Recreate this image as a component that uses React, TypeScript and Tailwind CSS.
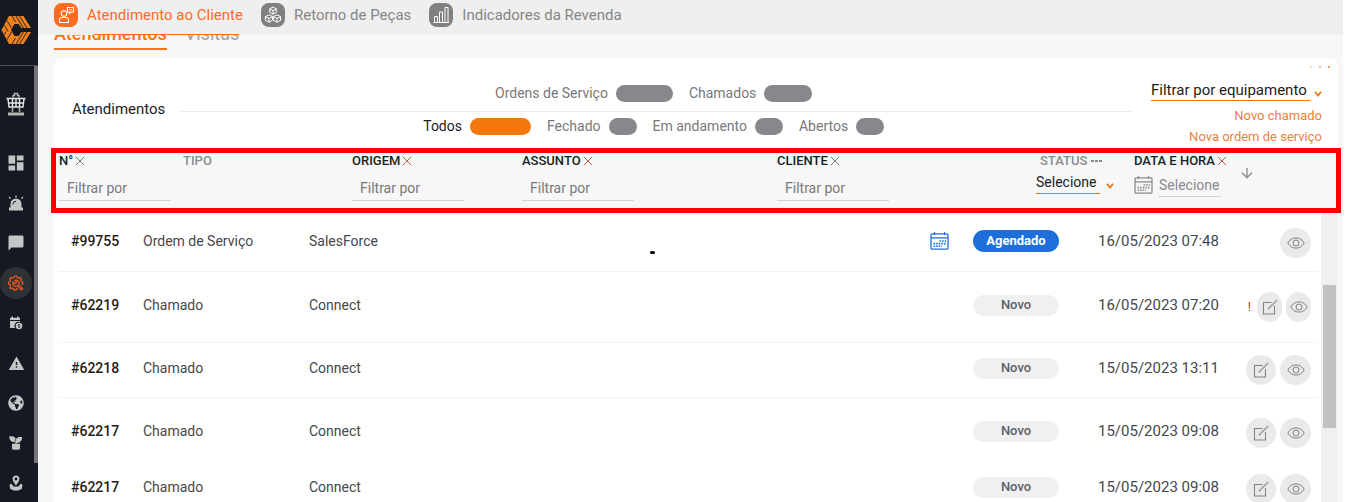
import React, { useState } from 'react';
import { MdDashboard, MdChatBubble, MdWarning } from 'react-icons/md';
import { FaGlobeAmericas } from 'react-icons/fa';
import { RiPlantFill } from 'react-icons/ri';
import { ArrowDown } from 'lucide-react';

type IconProps = { className?: string };

const Logo = () => (
  <svg viewBox="0 0 30 28" className="h-7 w-[30px]">
    <path d="M8 0 H22.5 L30 12 H20.5 L17.5 8 H13.5 L10 14 L13.5 20 H17.5 L20.5 16 H30 L22.5 28 H8 L0.5 14 Z" fill="#f0821e" />
    <path
      d="M11 0 L14.5 6 M15 0 L22.5 12 M18.5 0 L26 12 M6 4.5 L10.5 12 M11 28 L14.5 22 M15 28 L22.5 16 M18.5 28 L26 16 M6 23.5 L10.5 16 M3.5 9.5 L7 15.5 M3.5 18.5 L5 15.5"
      fill="none"
      stroke="#151a22"
      strokeWidth="0.9"
    />
  </svg>
);

const TowerIcon = () => (
  <svg viewBox="0 0 20 24" className="h-6 w-5" fill="none" stroke="#e6e6e6" strokeWidth="1.4">
    <path d="M7 5.5 V3.5 H8.5 V1.5 H11.5 V3.5 H13 V5.5" stroke="#b5b5b5" />
    <path d="M0.5 6.5 H19.5 M2 7 L3 15 H17 L18 7 M2.5 11 H17.5 M6.5 7 V15 M10 7 V15 M13.5 7 V15" />
    <path d="M6.5 15.5 V20 M13.5 15.5 V20" stroke="#b5b5b5" />
    <path d="M2 22 H18" stroke="#b5b5b5" strokeWidth="3" />
  </svg>
);

const BeaconIcon = ({ className }: IconProps) => (
  <svg viewBox="0 0 16 16" className={className} fill="currentColor">
    <path d="M2.5 12.5 V9 A5.5 5.5 0 0 1 13.5 9 V12.5 H15 V15.5 H1 V12.5 Z" />
    <path d="M5 9.5 A3 3 0 0 1 8 6.3" fill="none" stroke="#151a22" strokeWidth="1" />
    <path d="M8 0.5 V2.5 M1 2 L2.6 3.6 M15 2 L13.4 3.6" stroke="currentColor" strokeWidth="1.3" />
  </svg>
);

const GearWrenchIcon = ({ className }: IconProps) => (
  <svg viewBox="0 0 16 16" className={className} fill="none" stroke="currentColor" strokeWidth="1.2">
    <path d="M10 14.3 L8.6 13.6 L7.6 15.2 H6.2 L5.6 13.6 L4.3 13 L2.8 13.7 L1.9 12.7 L2.6 11.2 L2 9.8 L0.6 9.2 V7.2 L2 6.6 L2.6 5.2 L1.9 3.6 L3.2 2.4 L4.7 3 L6 2.4 L6.6 1 H8.6 L9.2 2.4 L10.6 3 L12 2.4 L13.3 3.6 L12.7 5.2 L13.3 6.6 L14.8 7.2 V9 L13.6 9.6" />
    <path d="M14.8 13.6 L10.6 9.6 A2.9 2.9 0 0 0 7 5.4 L8.6 7.2 L7.2 8.6 L5.2 7 A2.9 2.9 0 0 0 9.4 10.8 L13.4 15 Z" />
  </svg>
);

const CalendarCoinIcon = ({ className }: IconProps) => (
  <svg viewBox="0 0 14 14" className={className} fill="currentColor">
    <path d="M1 1.8 H2.4 V0.5 H4 V1.8 H8 V0.5 H9.6 V1.8 H11 V4 H1 Z" />
    <path d="M1 4.9 H11 V6.2 A3.9 3.9 0 0 0 6.2 12 H1 Z" />
    <circle cx="10" cy="10" r="3.3" />
    <path d="M11 8.6 H9.3 V10 H10.8 V11.4 H9" fill="none" stroke="#151a22" strokeWidth="0.7" />
  </svg>
);

const PinHandsIcon = ({ className }: IconProps) => (
  <svg viewBox="0 0 14 16" className={className} fill="currentColor">
    <path fillRule="evenodd" d="M7 0.5 A3.4 3.4 0 0 0 3.6 4 C3.6 6.4 7 10.4 7 10.4 S10.4 6.4 10.4 4 A3.4 3.4 0 0 0 7 0.5 Z M7 2.6 A1.4 1.4 0 1 1 7 5.4 A1.4 1.4 0 1 1 7 2.6 Z" />
    <path d="M0.5 10 L2.2 8.6 L4.6 11.4 H9.4 L11.8 8.6 L13.5 10 L12.8 14 L9 15.5 H5 L1.2 14 Z" />
  </svg>
);

const ClientIcon = () => (
  <svg viewBox="0 0 24 24" className="h-6 w-6" fill="none" stroke="#ffffff" strokeWidth="1.1">
    <circle cx="10" cy="10.5" r="2.8" />
    <path d="M5.5 19.5 V17.5 Q5.5 14.5 8.3 14.5 H11.7 Q14.5 14.5 14.5 17.5 V19.5 Z" />
    <path d="M13.5 4.5 H19.5 V9 H17 L15.5 10.5 V9 H13.5 Z M15 6.7 H18" />
  </svg>
);

const PartsIcon = () => (
  <svg viewBox="0 0 24 24" className="h-6 w-6" fill="none" stroke="#ffffff" strokeWidth="1">
    <path d="M12 4 L15.3 5.8 V9.4 L12 11.2 L8.7 9.4 V5.8 Z M8.7 5.8 L12 7.6 L15.3 5.8 M12 7.6 V11.2" />
    <path d="M8 11.8 L11.6 13.7 V17.3 L8 19.2 L4.4 17.3 V13.7 Z M4.4 13.7 L8 15.5 L11.6 13.7 M8 15.5 V19.2" />
    <path d="M16 11.8 L19.6 13.7 V17.3 L16 19.2 L12.4 17.3 V13.7 Z M12.4 13.7 L16 15.5 L19.6 13.7 M16 15.5 V19.2" />
  </svg>
);

const BarsIcon = () => (
  <svg viewBox="0 0 24 24" className="h-6 w-6" fill="none" stroke="#ffffff" strokeWidth="1">
    <path d="M5.5 13.5 H8.5 V19.5 H5.5 Z M10.5 9 H13.5 V19.5 H10.5 Z M16 4.5 H19 V19.5 H16 Z M4.5 19.5 H20" />
  </svg>
);

const CalendarIcon = ({ className }: IconProps) => (
  <svg viewBox="0 0 19 18" className={className} fill="none" stroke="currentColor">
    <rect x="1" y="1.8" width="17" height="15.4" rx="1.2" strokeWidth="1.3" />
    <path d="M1 5.8 H18 M4.5 0 V3 M14.5 0 V3" strokeWidth="1.2" />
    <path d="M9.5 9 H16 M3.5 11.6 H16 M3.5 14.2 H12" strokeWidth="1.6" strokeDasharray="1.6 1" />
  </svg>
);

const EyeIcon = () => (
  <svg viewBox="0 0 18 12" className="h-3 w-[18px] shrink-0" fill="none" stroke="#808285" strokeWidth="1">
    <path d="M0.8 6 C4.5 -0.8 13.5 -0.8 17.2 6 C13.5 12.8 4.5 12.8 0.8 6 Z" />
    <circle cx="9" cy="6" r="3" />
  </svg>
);

const EditIcon = () => (
  <svg viewBox="0 0 16 16" className="h-4 w-4 shrink-0" fill="none" stroke="#808285" strokeWidth="1.1">
    <path d="M9.5 3.5 H1.5 V15 H12.5 V7" />
    <path d="M6 10.3 L6.4 8.8 L14.6 1 L15.2 1.6 L7.2 9.8 Z" strokeWidth="0.8" />
  </svg>
);

const Cross = ({ className }: IconProps) => (
  <svg viewBox="0 0 10 10" className="h-[10px] w-[10px]" fill="none" stroke="currentColor">
    <path d="M0.8 0.8 L9.2 9.2 M9.2 0.8 L0.8 9.2" className={className} />
  </svg>
);

const Chevron = () => (
  <svg viewBox="0 0 8 6" className="mt-[6px] h-[6px] w-2" fill="none" stroke="#f4770e" strokeWidth="1.8">
    <path d="M1 0.8 L4 4.6 L7 0.8" />
  </svg>
);

const menu = [
  { label: 'Painel', icon: MdDashboard, size: 'h-5 w-5' },
  { label: 'Alertas', icon: BeaconIcon, size: 'h-4 w-4' },
  { label: 'Mensagens', icon: MdChatBubble, size: 'h-[18px] w-[18px]' },
  { label: 'Serviços', icon: GearWrenchIcon, size: 'h-4 w-4', active: true },
  { label: 'Agenda', icon: CalendarCoinIcon, size: 'h-[14px] w-[14px]' },
  { label: 'Avisos', icon: MdWarning, size: 'h-[17px] w-[17px]' },
  { label: 'Mapa', icon: FaGlobeAmericas, size: 'h-4 w-4' },
  { label: 'Plantio', icon: RiPlantFill, size: 'h-4 w-4' },
  { label: 'Visitas', icon: PinHandsIcon, size: 'h-4 w-4' },
];

const sections = [
  { label: 'Atendimento ao Cliente', icon: ClientIcon },
  { label: 'Retorno de Peças', icon: PartsIcon },
  { label: 'Indicadores da Revenda', icon: BarsIcon },
];

const kinds = [
  { label: 'Ordens de Serviço', pill: 'w-[57px]' },
  { label: 'Chamados', pill: 'w-12' },
];

const states = [
  { label: 'Todos', pill: 'w-[61px]' },
  { label: 'Fechado', pill: 'w-7' },
  { label: 'Em andamento', pill: 'w-7' },
  { label: 'Abertos', pill: 'w-7' },
];

const rows = [
  { id: '#99755', type: 'Ordem de Serviço', origin: 'SalesForce', status: 'Agendado', date: '16/05/2023 07:48', pad: 'pt-[15px] pb-[13px]', scheduled: true, line: true },
  { id: '#62219', type: 'Chamado', origin: 'Connect', status: 'Novo', date: '16/05/2023 07:20', pad: 'py-5', urgent: true, line: true },
  { id: '#62218', type: 'Chamado', origin: 'Connect', status: 'Novo', date: '15/05/2023 13:11', pad: 'py-3', line: true },
  { id: '#62217', type: 'Chamado', origin: 'Connect', status: 'Novo', date: '15/05/2023 09:08', pad: 'py-5' },
  { id: '#62217', type: 'Chamado', origin: 'Connect', status: 'Novo', date: '15/05/2023 09:08', pad: 'py-[6px]' },
];

const FilterHead: React.FC<{ label: string; cross?: string }> = ({ label, cross = 'stroke-[#77797c]' }) => (
  <th className="text-left font-medium text-[#1b1d22]">
    <div className="flex items-center gap-[2px]">
      {label}
      <Cross className={cross} />
    </div>
    <input
      aria-label={label}
      placeholder="Filtrar por"
      className="mt-2 block h-6 w-28 border-b border-[#d2d2d2] bg-transparent px-2 pb-[2px] text-sm font-normal outline-none placeholder:text-[#77797c]"
    />
  </th>
);

const App: React.FC = () => {
  const [section, setSection] = useState('Atendimento ao Cliente');
  const [state, setState] = useState('Todos');

  return (
    <div className="flex h-screen overflow-hidden bg-white font-[Roboto,sans-serif] text-[#45474b]">
      {/* Sidebar */}
      <aside className="relative w-[38px] shrink-0 bg-[#151a22]">
        <div className="flex h-[66px] items-center border-b border-[#4a4d52] pb-[6px] pl-px">
          <Logo />
        </div>
        <nav className="flex w-8 flex-col items-center">
          <a href="#" aria-label="Torre" className="mt-[26px] mb-[27px]">
            <TowerIcon />
          </a>
          {menu.map(item => (
            <a key={item.label} href="#" aria-label={item.label} className="flex h-10 items-center justify-center">
              <span className={`flex h-8 w-8 items-center justify-center rounded-full ${item.active ? 'bg-[#2d3237] text-[#f15a24]' : 'text-[#c4c5c7]'}`}>
                <item.icon className={item.size} />
              </span>
            </a>
          ))}
        </nav>
        <div className="absolute top-[66px] right-0 h-[397px] w-1 bg-[#757575]" />
      </aside>

      <main className="mr-[5px] flex min-w-0 flex-1 flex-col bg-[#f7f7f7]">
        {/* Header */}
        <header className="relative z-10 flex h-[35px] shrink-0 gap-[18px] bg-[#efefef] pl-4">
          {sections.map(s => (
            <button
              key={s.label}
              onClick={() => setSection(s.label)}
              className={`relative flex items-center gap-[9px] pb-[5px] text-[15px] ${section === s.label ? 'text-[#ff6b1f]' : 'text-[#868686]'}`}
            >
              <span className={`flex rounded-lg ${section === s.label ? 'bg-[#ff6b1f]' : 'bg-[#808080]'}`}>
                <s.icon />
              </span>
              {s.label}
              {section === s.label && <span className="absolute right-1 bottom-0 left-10 h-px bg-[#ff6b1f]" />}
            </button>
          ))}
        </header>

        <div className="-mt-3 flex gap-[18px] pl-4 text-lg leading-[22px] font-medium">
          <button className="border-b-2 border-[#f4770e] pb-[3px] text-[#f4770e]">Atendimentos</button>
          <button className="border-b-2 border-transparent pb-[3px] font-normal text-[#a3a3a3]">Visitas</button>
        </div>

        <section className="relative mt-2 mr-[5px] ml-4 flex-1 rounded-t-lg bg-white">
          <div className="absolute top-2 right-2 flex gap-[7px]">
            <span className="h-[2px] w-[2px] bg-[#fbd9bd]" />
            <span className="h-[2px] w-[2px] bg-[#f8c194]" />
            <span className="h-[2px] w-[2px] bg-[#f4a05a]" />
          </div>

          {/* Totals and filters */}
          <div className="flex pt-[22px] pr-4 pb-px pl-[18px]">
            <div className="flex flex-1 items-center gap-4 pb-2">
              <h1 className="text-[15px] text-[#1b1d22]">Atendimentos</h1>
              <div className="flex-1">
                <div className="flex justify-center gap-4 pr-[6px] pb-[9px] text-sm leading-[17px] text-[#77797c]">
                  {kinds.map(k => (
                    <button key={k.label} className="flex items-center gap-2">
                      {k.label}
                      <span className={`h-[17px] rounded-full bg-[#87888c] ${k.pill}`} />
                    </button>
                  ))}
                </div>
                <hr className="border-[#ececec]" />
                <div className="flex justify-center gap-4 pt-[6px] pr-[6px] text-sm leading-[17px]">
                  {states.map(s => (
                    <button
                      key={s.label}
                      onClick={() => setState(s.label)}
                      className={`flex items-center gap-2 ${state === s.label ? 'text-[#1b1d22]' : 'text-[#77797c]'}`}
                    >
                      {s.label}
                      <span className={`h-[17px] rounded-full ${s.pill} ${state === s.label ? 'bg-[#f4770e]' : 'bg-[#87888c]'}`} />
                    </button>
                  ))}
                </div>
              </div>
            </div>
            <div className="ml-[19px] flex flex-col items-end text-[13px] leading-[21px] text-[#f08040]">
              <div className="mb-1 flex items-center gap-1">
                <select
                  aria-label="Equipamento"
                  className="h-[21px] w-[159px] appearance-none border-b border-[#f4770e] bg-transparent text-[15px] text-[#1b1d22] outline-none"
                >
                  <option>Filtrar por equipamento</option>
                </select>
                <Chevron />
              </div>
              <a href="#">Novo chamado</a>
              <a href="#">Nova ordem de serviço</a>
            </div>
          </div>

          {/* Table */}
          <div className="relative -mx-[3px]">
            <table className="block">
              <thead className="block h-[65px] border-[5px] border-[#fe0000] bg-[#f7f7f7] pl-[3px] text-[13px] leading-4">
                <tr className="grid grid-cols-[124fr_169fr_170fr_255fr_259fr_98fr_113fr_89fr]">
                  <FilterHead label="N°" />
                  <th className="text-left font-medium text-[#8a8b8e]">TIPO</th>
                  <FilterHead label="ORIGEM" cross="stroke-[#c0604a]" />
                  <FilterHead label="ASSUNTO" cross="stroke-[#c0604a]" />
                  <FilterHead label="CLIENTE" />
                  <th className="text-left font-medium text-[#8a8b8e]">
                    <div className="flex items-center gap-1 pl-1">
                      STATUS
                      <span className="flex gap-px">
                        <span className="h-[2px] w-[3px] bg-[#8a8b8e]" />
                        <span className="h-[2px] w-[3px] bg-[#8a8b8e]" />
                        <span className="h-[2px] w-[3px] bg-[#8a8b8e]" />
                      </span>
                    </div>
                    <div className="mt-[2px] flex items-center gap-[6px]">
                      <select
                        aria-label="Status"
                        className="h-[23px] w-16 appearance-none border-b border-[#f4770e] bg-transparent text-sm font-normal text-[#1b1d22] outline-none"
                      >
                        <option>Selecione</option>
                      </select>
                      <Chevron />
                    </div>
                  </th>
                  <th className="text-left font-medium text-[#1b1d22]">
                    <div className="flex items-center gap-[2px]">
                      DATA E HORA
                      <Cross className="stroke-[#c0604a]" />
                    </div>
                    <div className="mt-1 flex items-center gap-[6px]">
                      <CalendarIcon className="h-[18px] w-[19px] shrink-0 text-[#8a8b8e]" />
                      <input
                        aria-label="Data e hora"
                        placeholder="Selecione"
                        className="h-6 w-[62px] border-b border-[#d2d2d2] bg-transparent text-sm font-normal outline-none placeholder:text-[#8a8b8e]"
                      />
                    </div>
                  </th>
                  <th className="pt-3 text-left">
                    <button aria-label="Ordenar" className="-ml-2 block text-[#8a8b8e]">
                      <ArrowDown className="h-4 w-4" strokeWidth={2} />
                    </button>
                  </th>
                </tr>
              </thead>
              <tbody className="mr-[23px] ml-2 block text-sm">
                {rows.map((row, i) => (
                  <tr
                    key={i}
                    className={`grid grid-cols-[84fr_166fr_211fr_265fr_188fr_125fr_130fr_90fr] items-center ${row.pad} ${row.line ? 'border-b border-[#f3f3f3]' : ''}`}
                  >
                    <td className="pb-1 pl-3 font-medium text-[#1b1d22]">{row.id}</td>
                    <td className="pb-1">{row.type}</td>
                    <td className="pb-1">{row.origin}</td>
                    <td className="flex justify-center">
                      {row.scheduled && <span className="mt-[18px] h-[3px] w-[5px] rounded-full bg-black" />}
                    </td>
                    <td className="flex justify-end pr-6 pb-1">
                      {row.scheduled && <CalendarIcon className="h-[18px] w-[19px] text-[#1e6fd9]" />}
                    </td>
                    <td className="pb-1">
                      <span
                        className={`flex w-[86px] items-center justify-center rounded-full text-[13px] ${
                          row.scheduled ? 'h-[22px] bg-[#1e6fd9] font-bold text-white' : 'h-[21px] bg-[#f0f0f0] font-medium text-[#5f6165]'
                        }`}
                      >
                        {row.status}
                      </span>
                    </td>
                    <td className="pb-[2px] text-[15px]">{row.date}</td>
                    <td className="flex items-center justify-end gap-1 pr-[7px]">
                      {row.urgent && <span className="mr-[2px] text-[13px] text-[#f0282d]">!</span>}
                      {!row.scheduled && (
                        <button aria-label="Editar" className={`flex h-[30px] items-center justify-center rounded-full bg-[#eaeaea] ${row.urgent ? 'w-[25px]' : 'w-[30px]'}`}>
                          <EditIcon />
                        </button>
                      )}
                      <button aria-label="Visualizar" className={`flex h-[30px] items-center justify-center rounded-full bg-[#eaeaea] ${row.urgent ? 'w-[25px]' : 'w-[31px]'}`}>
                        <EyeIcon />
                      </button>
                    </td>
                  </tr>
                ))}
              </tbody>
            </table>
            <div className="absolute top-[65px] right-[3px] bottom-0 w-[17px] bg-[#f0f0f0] px-[2px] pt-[72px]">
              <div className="h-[143px] bg-[#c1c1c1]" />
            </div>
          </div>
        </section>
      </main>
    </div>
  );
};

export default App;
